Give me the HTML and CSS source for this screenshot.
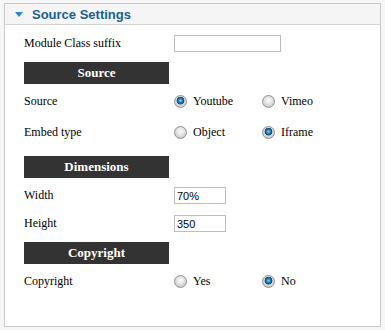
FILE: index.html
```html
<!DOCTYPE html>
<html lang="en">
<head>
    <meta charset="UTF-8">
    <title>Source Settings</title>
    <link rel="stylesheet" href="styles.css">
</head>
<body>
    <div class="panel">
        <h3 class="panel-title"><span class="arrow"></span>Source Settings</h3>
        <div class="panel-body">
            <div class="row row-suffix">
                <label class="label">Module Class suffix</label>
                <input class="field field-wide" type="text">
            </div>

            <div class="bar bar-first">Source</div>
            <div class="row row-tall">
                <span class="label">Source</span>
                <div class="options">
                    <label class="option"><input type="radio" name="source" checked>Youtube</label>
                    <label class="option"><input type="radio" name="source">Vimeo</label>
                </div>
            </div>
            <div class="row row-tall">
                <span class="label">Embed type</span>
                <div class="options">
                    <label class="option"><input type="radio" name="embed">Object</label>
                    <label class="option"><input type="radio" name="embed" checked>Iframe</label>
                </div>
            </div>

            <div class="bar">Dimensions</div>
            <div class="row row-width">
                <label class="label">Width</label>
                <input class="field" type="text" value="70%">
            </div>
            <div class="row row-height">
                <label class="label">Height</label>
                <input class="field" type="text" value="350">
            </div>

            <div class="bar bar-last">Copyright</div>
            <div class="row row-copy">
                <span class="label">Copyright</span>
                <div class="options">
                    <label class="option"><input type="radio" name="copyright">Yes</label>
                    <label class="option"><input type="radio" name="copyright" checked>No</label>
                </div>
            </div>
        </div>
    </div>
</body>
</html>
```

FILE: styles.css
```css
body {
    margin: 0;
    padding: 3px 4px 0;
    background: #f6f6f6;
    font-family: "Liberation Serif", "Times New Roman", serif;
    font-size: 12px;
    color: #000;
}

.panel {
    width: 375px;
    border: 1px solid #c9c9c9;
    background: #fff;
    padding-bottom: 32px;
}

.panel-title {
    margin: 0;
    height: 20px;
    padding-left: 10px;
    display: flex;
    align-items: center;
    background: #f5f5f5;
    border-bottom: 1px solid #d2d2d2;
    font-family: "Liberation Sans", Arial, sans-serif;
    font-size: 13px;
    font-weight: bold;
    color: #1b5f90;
}

.arrow {
    width: 0;
    height: 0;
    margin-right: 9px;
    border-left: 4px solid transparent;
    border-right: 4px solid transparent;
    border-top: 5px solid #2589c6;
}

.panel-body {
    padding-left: 19px;
}

.row {
    display: flex;
    align-items: center;
}

.label {
    width: 150px;
    flex-shrink: 0;
}

/* sibling margins collapse: a row's top margin is measured from the bar above */
.row-suffix {
    margin-top: 6px;
    height: 24px;
}

.row-tall {
    height: 31px;
}

.row-width {
    margin-top: 5px;
    height: 25px;
}

.row-height {
    margin-top: 3px;
    height: 25px;
}

.row-copy {
    margin-top: 5px;
    height: 25px;
}

.bar {
    width: 145px;
    height: 22px;
    margin-top: 8px;
    margin-bottom: 2px;
    background: #333;
    color: #fff;
    font-size: 13px;
    font-weight: bold;
    line-height: 22px;
    text-align: center;
}

.bar-first {
    margin-top: 7px;
}

.bar-last {
    margin-top: 6px;
}

.field {
    box-sizing: border-box;
    width: 52px;
    height: 17px;
    margin: 0;
    padding: 0 2px;
    border: 1px solid #bdbdbd;
    font-family: "Liberation Sans", Arial, sans-serif;
    font-size: 11px;
    color: #000;
    outline: none;
}

.field-wide {
    width: 107px;
}

.options {
    display: flex;
}

.option {
    width: 88px;
    display: flex;
    align-items: center;
}

.option input {
    appearance: none;
    -webkit-appearance: none;
    box-sizing: border-box;
    width: 13px;
    height: 13px;
    margin: 0 6px 0 0;
    border: 1px solid #8f9091;
    border-radius: 50%;
    background: radial-gradient(circle at 50% 40%, #fbfbfb 0, #e9e9e9 3px, #cfcfcf 6px);
}

.option input:checked {
    background:
        radial-gradient(circle at 50% 42%, #8fdcfb 0, #2a8ed0 1.6px, #135b93 3px, #2d3f4f 3.6px, transparent 4.2px),
        radial-gradient(circle at 50% 40%, #fbfbfb 0, #e9e9e9 3px, #cfcfcf 6px);
}
```
